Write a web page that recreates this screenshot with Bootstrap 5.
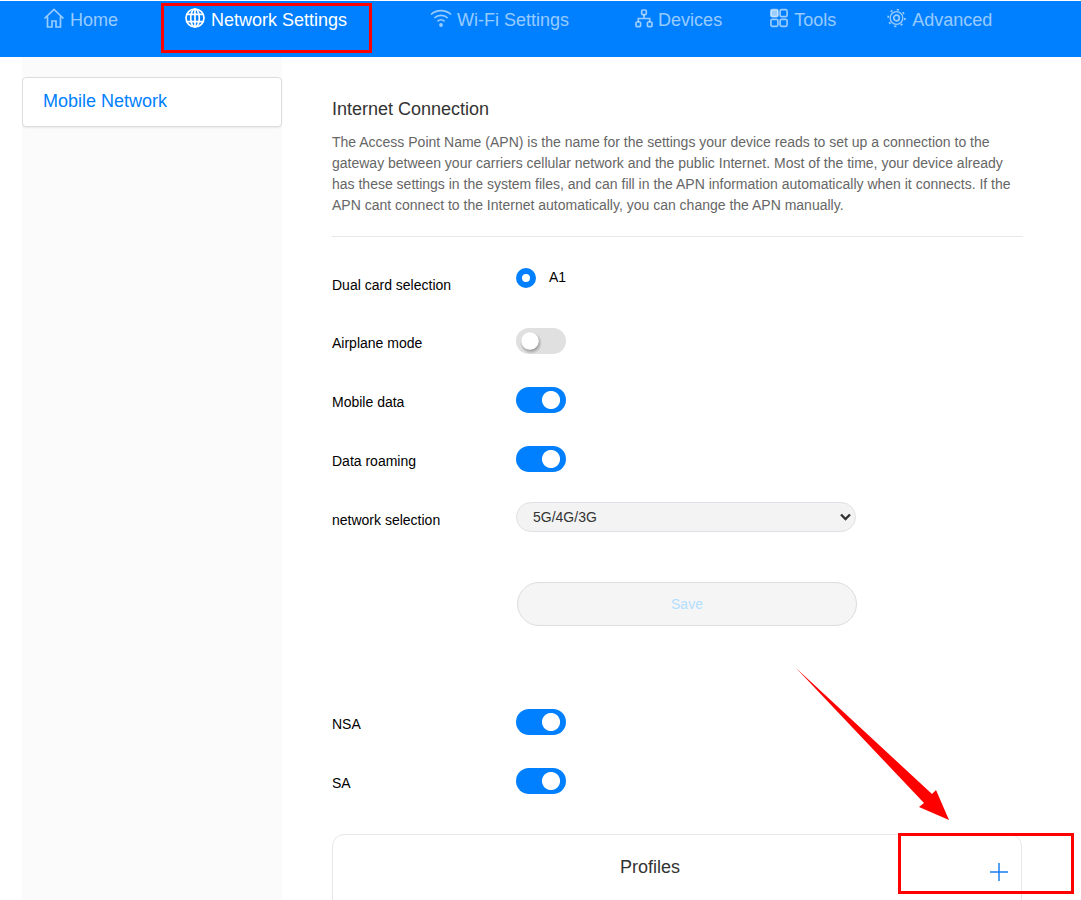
<!DOCTYPE html>
<html lang="en">
<head>
  <meta charset="UTF-8" />
  <title>Network Settings</title>
  <link rel="stylesheet" href="https://cdn.jsdelivr.net/npm/bootstrap@5.3.0/dist/css/bootstrap.min.css" />
  <style>
    html, body { height: 900px; overflow: hidden; }
    body {
      font-family: "Liberation Sans", Arial, sans-serif;
      font-size: 14px;
      color: #000;
      padding-top: 1px;
      position: relative;
    }
    /* top bar */
    .top-bar { background: #007fff; height: 56px; flex-wrap: nowrap; }
    .top-bar .nav-link {
      display: flex;
      align-items: flex-start;
      padding: 7px 0 0;
      font-size: 18px;
      line-height: 24px;
      color: rgba(255, 255, 255, .6);
    }
    .top-bar .nav-link.active { color: #fff; }
    .top-bar svg { fill: none; stroke: currentColor; stroke-width: 1.7; flex: none; }
    .tab-home { margin-left: 43px; }
    .tab-net { margin-left: 67px; }
    .tab-wifi { margin-left: 83px; }
    .tab-dev { margin-left: 66px; }
    .tab-tools { margin-left: 48px; }
    .tab-adv { margin-left: 51px; }
    .gap-home { margin-left: 5px; }
    .gap-net { margin-left: 6px; }
    .gap-wifi { margin-left: 5px; }
    .gap-dev { margin-left: 5px; }
    .gap-tools { margin-left: 6px; }
    .gap-adv { margin-left: 6px; }

    /* page columns */
    .page-wrap { margin-left: 22px; gap: 50px; height: 843px; overflow: hidden; }
    .side-col { width: 260px; background: #fbfbfb; padding-top: 20px; flex: none; }
    .side-item {
      height: 50px;
      line-height: 46px;
      padding-left: 20px;
      font-size: 18px;
      color: #007fff;
      background: #fff;
      border: 1px solid #ddd;
      border-radius: 4px;
      box-shadow: 0 1px 2px rgba(0, 0, 0, .08);
    }
    .main-col { width: 691px; padding-top: 40px; flex: none; }
    .sec-title { font-size: 18px; line-height: 24px; color: #333; margin: 0 0 11px; font-weight: 400; }
    .sec-text { line-height: 21px; color: #666; margin: 0; }
    .sec-line { margin: 20px 0 0; border-color: #e8e8e8; opacity: 1; }

    /* setting rows */
    .set-row { height: 59px; }
    .set-row.first-row { height: 75px; }
    .set-label { width: 184px; flex: none; line-height: 21px; padding-top: 21px; }
    .first-row .set-label { padding-top: 38px; }
    .set-ctrl { padding-top: 16px; }
    .first-row .set-ctrl { padding-top: 31px; }
    .sel-row .set-ctrl { padding-top: 13px; }

    .form-check-input.dot-radio {
      width: 20px;
      height: 20px;
      margin: 0;
      float: none;
      background: #fff;
      border: 6px solid #007fff;
    }
    .dot-label { margin-left: 13px; line-height: 18px; }

    .form-switch { padding: 0; margin: 0; min-height: 0; }
    .form-switch .form-check-input.slide-sw {
      width: 50px;
      height: 26px;
      margin: 0;
      float: none;
      display: block;
      border: 0;
      border-radius: 13px;
      background-color: #e0e0e0;
      background-size: auto;
      background-position: 0 0;
      background-image:
        radial-gradient(circle 9px at 14px 13px, #fff 92%, transparent 100%),
        radial-gradient(circle 11px at 15px 15px, rgba(0, 0, 0, .35) 55%, transparent 100%);
    }
    .form-switch .form-check-input.slide-sw:checked {
      background-color: #007fff;
      background-image: radial-gradient(circle 9.5px at 35px 13px, #fff 90%, transparent 100%);
    }
    .form-select.net-pick {
      width: 340px;
      height: 30px;
      padding: 0 24px 0 16px;
      font-size: 14px;
      line-height: 28px;
      color: #333;
      background-color: #f3f3f3;
      background-image: url("data:image/svg+xml,%3csvg xmlns='http://www.w3.org/2000/svg' viewBox='0 0 11 8'%3e%3cpath fill='none' stroke='%23333' stroke-width='2.400' d='M1 1.500l4.500 4.500L10 1.500'/%3e%3c/svg%3e");
      background-size: 11px 8px;
      background-position: right 4px center;
      border: 1px solid #e0e0e6;
      border-radius: 15px;
    }
    .save-wrap { height: 145px; padding: 34px 0 0 185px; }
    .btn.save-btn {
      display: block;
      width: 340px;
      height: 44px;
      font-size: 14px;
      color: #b3dfff;
      background: #f5f5f5;
      border: 1px solid #ddd;
      border-radius: 22px;
      opacity: 1;
    }
    .card.profile-box {
      margin-top: 23px;
      height: 120px;
      border: 1px solid #e8e8e8;
      border-radius: 12px;
      width: 690px;
    }
    .profile-head { height: 65px; font-size: 18px; color: #333; padding: 19px 54px 0 0; }
    .plus-btn { position: absolute; left: 657px; top: 28px; display: block; }

    /* red marks drawn over the page */
    .mark-box { position: absolute; border: 3px solid #f00; pointer-events: none; }
    .mark-net { left: 161px; top: 3px; width: 211px; height: 50px; }
    .mark-plus { left: 898px; top: 833px; width: 176px; height: 61px; }
    .mark-arrow { position: absolute; left: 0; top: 0; }
  </style>
</head>
<body>
  <!-- Top tabs -->
  <ul class="nav top-bar">
    <li class="nav-item tab-home">
      <a class="nav-link" href="#">
        <svg width="22" height="20" viewBox="0 0 22 20"><path d="M1.500 10.500 11 1.500l9.500 9M4.500 8.500V19h4.500v-6h4v6h4.500V8.500"/></svg>
        <span class="gap-home">Home</span>
      </a>
    </li>
    <li class="nav-item tab-net">
      <a class="nav-link active" href="#">
        <svg width="20" height="20" viewBox="0 0 20 20"><circle cx="10" cy="10" r="9"/><ellipse cx="10" cy="10" rx="4.300" ry="9"/><path d="M10 1v18M1.800 6.300h16.400M1.800 13.700h16.400"/></svg>
        <span class="gap-net">Network Settings</span>
      </a>
    </li>
    <li class="nav-item tab-wifi">
      <a class="nav-link" href="#">
        <svg width="22" height="20" viewBox="0 0 22 20"><path d="M1 6.500c5.500-5.300 14.500-5.300 20 0M4.300 10c3.700-3.500 9.700-3.500 13.400 0M7.500 13.300c2-1.800 5-1.800 7 0"/><circle cx="11" cy="17" r="1.900" fill="currentColor" stroke="none"/></svg>
        <span class="gap-wifi">Wi-Fi Settings</span>
      </a>
    </li>
    <li class="nav-item tab-dev">
      <a class="nav-link" href="#">
        <svg width="18" height="20" viewBox="0 0 18 20"><rect x="6.700" y="2" width="4.600" height="4.600" rx="1"/><rect x="1" y="14" width="4.600" height="4.600" rx="1"/><rect x="12.400" y="14" width="4.600" height="4.600" rx="1"/><path d="M9 6.600V10.500M3.300 14v-3.500h11.400V14"/></svg>
        <span class="gap-dev">Devices</span>
      </a>
    </li>
    <li class="nav-item tab-tools">
      <a class="nav-link" href="#">
        <svg width="18" height="20" viewBox="0 0 18 20"><rect x=".9" y="1.700" width="7" height="7" rx="1.500" fill="currentColor"/><rect x="10.100" y="1.700" width="7" height="7" rx="1.500"/><rect x=".9" y="11.300" width="7" height="7" rx="1.500"/><rect x="10.100" y="11.300" width="7" height="7" rx="1.500"/></svg>
        <span class="gap-tools">Tools</span>
      </a>
    </li>
    <li class="nav-item tab-adv">
      <a class="nav-link" href="#">
        <svg width="19" height="20" viewBox="0 0 19 20"><circle cx="9.500" cy="10" r="6.300" stroke-width="1.300"/><circle cx="9.500" cy="10" r="2.800"/><circle cx="9.500" cy="10" r="8.400" stroke-width="1.700" stroke-dasharray="2.200 4.400"/></svg>
        <span class="gap-adv">Advanced</span>
      </a>
    </li>
  </ul>

  <div class="d-flex page-wrap">
    <!-- Side menu -->
    <div class="side-col">
      <div class="side-item">Mobile Network</div>
    </div>

    <!-- Settings -->
    <div class="main-col">
      <h5 class="sec-title">Internet Connection</h5>
      <p class="sec-text">The Access Point Name (APN) is the name for the settings your device reads to set up a connection to the gateway between your carriers cellular network and the public Internet. Most of the time, your device already has these settings in the system files, and can fill in the APN information automatically when it connects. If the APN cant connect to the Internet automatically, you can change the APN manually.</p>
      <hr class="sec-line" />

      <div class="d-flex set-row first-row">
        <div class="set-label">Dual card selection</div>
        <div class="set-ctrl d-flex align-items-start">
          <input class="form-check-input dot-radio" type="radio" name="simCard" checked />
          <span class="dot-label">A1</span>
        </div>
      </div>
      <div class="d-flex set-row">
        <div class="set-label">Airplane mode</div>
        <div class="set-ctrl"><div class="form-check form-switch"><input class="form-check-input slide-sw" type="checkbox" /></div></div>
      </div>
      <div class="d-flex set-row">
        <div class="set-label">Mobile data</div>
        <div class="set-ctrl"><div class="form-check form-switch"><input class="form-check-input slide-sw" type="checkbox" checked /></div></div>
      </div>
      <div class="d-flex set-row">
        <div class="set-label">Data roaming</div>
        <div class="set-ctrl"><div class="form-check form-switch"><input class="form-check-input slide-sw" type="checkbox" checked /></div></div>
      </div>
      <div class="d-flex set-row sel-row">
        <div class="set-label">network selection</div>
        <div class="set-ctrl">
          <select class="form-select net-pick"><option>5G/4G/3G</option></select>
        </div>
      </div>

      <div class="save-wrap">
        <button class="btn save-btn" type="button" disabled>Save</button>
      </div>

      <div class="d-flex set-row">
        <div class="set-label">NSA</div>
        <div class="set-ctrl"><div class="form-check form-switch"><input class="form-check-input slide-sw" type="checkbox" checked /></div></div>
      </div>
      <div class="d-flex set-row">
        <div class="set-label">SA</div>
        <div class="set-ctrl"><div class="form-check form-switch"><input class="form-check-input slide-sw" type="checkbox" checked /></div></div>
      </div>

      <div class="card profile-box">
        <div class="profile-head text-center">Profiles</div>
        <svg class="plus-btn" width="18" height="18" viewBox="0 0 18 18"><path d="M9 0v18M0 9h18" stroke="#1a7ff0" stroke-width="1.500"/></svg>
      </div>
    </div>
  </div>

  <!-- Red annotation marks -->
  <div class="mark-box mark-net"></div>
  <div class="mark-box mark-plus"></div>
  <svg class="mark-arrow" width="1081" height="900" viewBox="0 0 1081 900"><polygon points="796,668 932,794 936,790 949,820 919,807 924,803" fill="#f00"/></svg>

  <script src="https://cdn.jsdelivr.net/npm/bootstrap@5.3.0/dist/js/bootstrap.bundle.min.js"></script>
</body>
</html>
